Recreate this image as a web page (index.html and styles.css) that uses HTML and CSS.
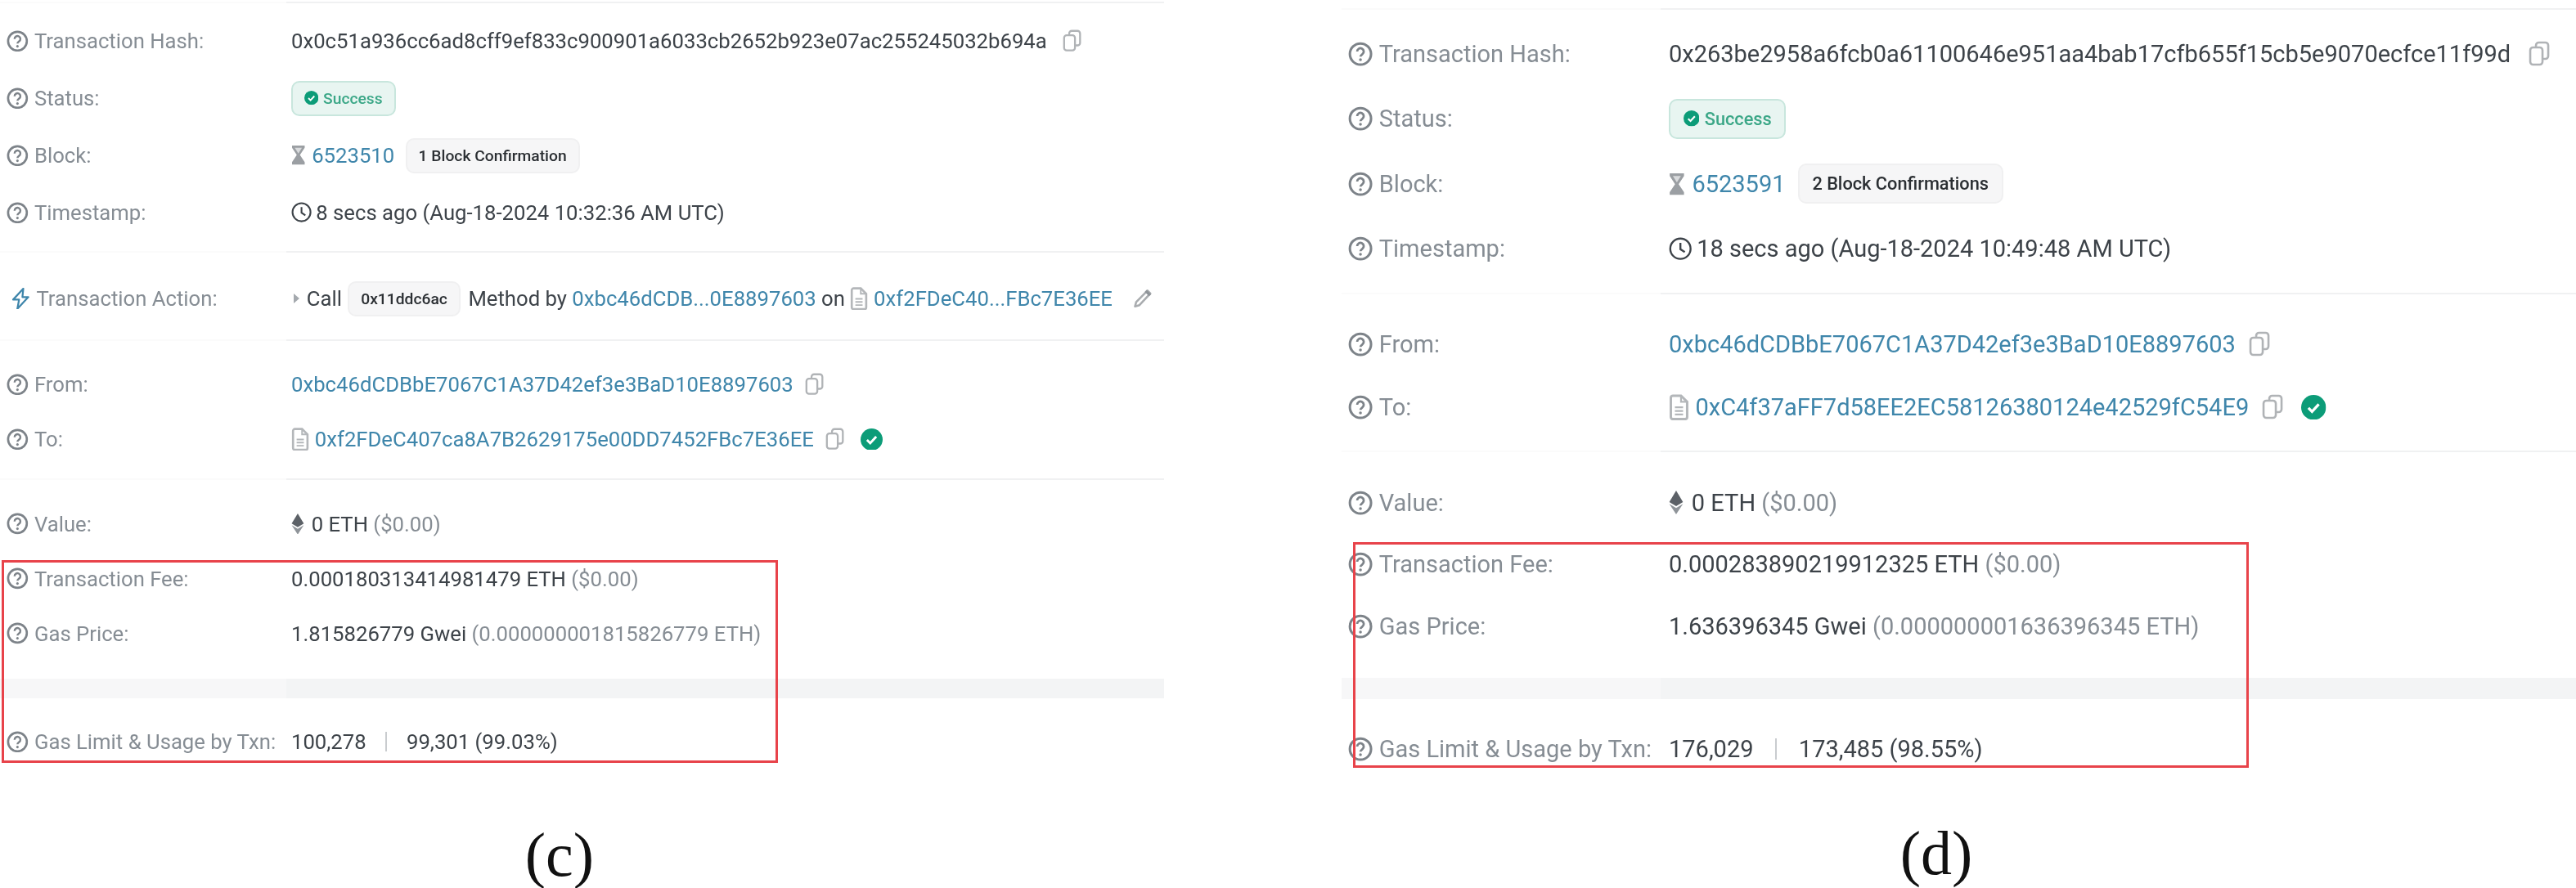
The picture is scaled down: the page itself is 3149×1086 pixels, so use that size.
FILE: index.html
```html
<!DOCTYPE html>
<html lang="en">
  <head>
    <meta charset="utf-8">
    <title>Transaction details</title>
    <link rel="stylesheet" href="styles.css">
  </head>
  <body>
    <!-- Icons used by both panels -->
    <svg class="defs" aria-hidden="true">
      <symbol id="i-help" viewBox="0 0 24 24">
        <circle cx="12" cy="12" r="10.3" fill="none" stroke="currentColor" stroke-width="2.4"/>
        <path d="M8.8 9.6a3.2 3.2 0 1 1 5 2.6c-1.1.8-1.8 1.2-1.8 2.4" fill="none" stroke="currentColor" stroke-width="2.2"/>
        <circle cx="12" cy="17.6" r="1.4" fill="currentColor"/>
      </symbol>
      <symbol id="i-copy" viewBox="0 0 26 31">
        <rect x="9" y="2" width="15" height="20" rx="3.5" fill="none" stroke="currentColor" stroke-width="2.6"/>
        <rect x="2" y="8" width="15" height="21" rx="3.5" fill="#fff" stroke="currentColor" stroke-width="2.6"/>
      </symbol>
      <symbol id="i-check" viewBox="0 0 24 24">
        <circle cx="12" cy="12" r="12" fill="currentColor"/>
        <path d="M7 12.5l3.5 3.5L17 9" fill="none" stroke="#fff" stroke-width="2.6"/>
      </symbol>
      <symbol id="i-glass" viewBox="0 0 18 26">
        <path d="M1 1h16v3l-6 9 6 9v3H1v-3l6-9-6-9z" fill="currentColor"/>
        <path d="M4.5 4h9L9 11z" fill="#d9dbdd"/>
      </symbol>
      <symbol id="i-clock" viewBox="0 0 24 24">
        <circle cx="12" cy="12" r="10.5" fill="none" stroke="currentColor" stroke-width="2"/>
        <path d="M12 6v6.5l4.5 3" fill="none" stroke="currentColor" stroke-width="2"/>
      </symbol>
      <symbol id="i-file" viewBox="0 0 20 26">
        <path d="M2 3.500a2 2 0 0 1 2-2h8l6 6v15a2 2 0 0 1-2 2H4a2 2 0 0 1-2-2z" fill="none" stroke="currentColor" stroke-width="2.400"/>
        <path d="M12 1.500v6h6M6 13h8M6 16.500h8M6 20h8" fill="none" stroke="currentColor" stroke-width="1.800"/>
      </symbol>
      <symbol id="i-eth" viewBox="0 0 16 26">
        <path d="M8 0l7.500 12.500L8 17 .5 12.500z" fill="#5c6167"/>
        <path d="M.5 14.500L8 19l7.500-4.500L8 26z" fill="#8f9499"/>
      </symbol>
      <symbol id="i-bolt" viewBox="0 0 24 26">
        <path d="M15 1L3 14h7l-2 11 13-14h-7z" fill="none" stroke="currentColor" stroke-width="2.200" stroke-linejoin="round"/>
      </symbol>
      <symbol id="i-pencil" viewBox="0 0 26 26">
        <path d="M19 3.500l3.500 3.500L9 21.500l-5.500 1.500L5 17.500z" fill="none" stroke="currentColor" stroke-width="2.600" stroke-linejoin="round"/>
        <path d="M18 2.500l5.500 5.500-2.500 2.500-5.500-5.500z" fill="#8f9499"/>
      </symbol>
    </svg>

    <main class="figure">
      <!-- Panel (c) -->
      <section class="panel panel-c">
        <div class="rule"></div>
        <div class="sec sec-main">
          <div class="row"><span class="label"><svg class="ic"><use href="#i-help"/></svg>Transaction Hash:</span><span class="value">0x0c51a936cc6ad8cff9ef833c900901a6033cb2652b923e07ac255245032b694a<svg class="ic-copy"><use href="#i-copy"/></svg></span></div>
          <div class="row"><span class="label"><svg class="ic"><use href="#i-help"/></svg>Status:</span><span class="value"><span class="badge-ok"><svg class="ic-ok"><use href="#i-check"/></svg>Success</span></span></div>
          <div class="row"><span class="label"><svg class="ic"><use href="#i-help"/></svg>Block:</span><span class="value"><svg class="ic-glass"><use href="#i-glass"/></svg><a class="link">6523510</a><span class="chip chip-block">1 Block Confirmation</span></span></div>
          <div class="row"><span class="label"><svg class="ic"><use href="#i-help"/></svg>Timestamp:</span><span class="value"><svg class="ic-clock"><use href="#i-clock"/></svg>8 secs ago (Aug-18-2024 10:32:36 AM UTC)</span></div>
        </div>
        <div class="rule"></div>
        <div class="sec sec-action">
          <div class="row"><span class="label"><svg class="ic ic-bolt"><use href="#i-bolt"/></svg>Transaction Action:</span><span class="value"><span class="caret"></span>Call<span class="chip chip-method">0x11ddc6ac</span>Method by <a class="link link-by">0xbc46dCDB...0E8897603</a> on <svg class="ic-file"><use href="#i-file"/></svg><a class="link">0xf2FDeC40...FBc7E36EE</a><svg class="ic-pencil"><use href="#i-pencil"/></svg></span></div>
        </div>
        <div class="rule"></div>
        <div class="sec sec-addr">
          <div class="row"><span class="label"><svg class="ic"><use href="#i-help"/></svg>From:</span><span class="value"><a class="link">0xbc46dCDBbE7067C1A37D42ef3e3BaD10E8897603</a><svg class="ic-copy"><use href="#i-copy"/></svg></span></div>
          <div class="row"><span class="label"><svg class="ic"><use href="#i-help"/></svg>To:</span><span class="value"><svg class="ic-file"><use href="#i-file"/></svg><a class="link">0xf2FDeC407ca8A7B2629175e00DD7452FBc7E36EE</a><svg class="ic-copy"><use href="#i-copy"/></svg><svg class="ic-verified"><use href="#i-check"/></svg></span></div>
        </div>
        <div class="rule"></div>
        <div class="sec sec-fees">
          <div class="row"><span class="label"><svg class="ic"><use href="#i-help"/></svg>Value:</span><span class="value"><svg class="ic-eth"><use href="#i-eth"/></svg>0 ETH&nbsp;<span class="muted">($0.00)</span></span></div>
          <div class="row"><span class="label"><svg class="ic"><use href="#i-help"/></svg>Transaction Fee:</span><span class="value">0.000180313414981479 ETH&nbsp;<span class="muted">($0.00)</span></span></div>
          <div class="row"><span class="label"><svg class="ic"><use href="#i-help"/></svg>Gas Price:</span><span class="value">1.815826779 Gwei&nbsp;<span class="muted">(0.000000001815826779 ETH)</span></span></div>
        </div>
        <div class="band"></div>
        <div class="sec sec-limit">
          <div class="row"><span class="label"><svg class="ic"><use href="#i-help"/></svg>Gas Limit &amp; Usage by Txn:</span><span class="value">100,278<span class="sep"></span>99,301 (99.03%)</span></div>
        </div>
        <p class="caption">(c)</p>
        <div class="mark"></div>
      </section>

      <!-- Panel (d) -->
      <section class="panel panel-d">
        <div class="rule"></div>
        <div class="sec sec-main">
          <div class="row"><span class="label"><svg class="ic"><use href="#i-help"/></svg>Transaction Hash:</span><span class="value">0x263be2958a6fcb0a61100646e951aa4bab17cfb655f15cb5e9070ecfce11f99d<svg class="ic-copy"><use href="#i-copy"/></svg></span></div>
          <div class="row"><span class="label"><svg class="ic"><use href="#i-help"/></svg>Status:</span><span class="value"><span class="badge-ok"><svg class="ic-ok"><use href="#i-check"/></svg>Success</span></span></div>
          <div class="row"><span class="label"><svg class="ic"><use href="#i-help"/></svg>Block:</span><span class="value"><svg class="ic-glass"><use href="#i-glass"/></svg><a class="link">6523591</a><span class="chip chip-block">2 Block Confirmations</span></span></div>
          <div class="row"><span class="label"><svg class="ic"><use href="#i-help"/></svg>Timestamp:</span><span class="value"><svg class="ic-clock"><use href="#i-clock"/></svg>18 secs ago (Aug-18-2024 10:49:48 AM UTC)</span></div>
        </div>
        <div class="rule"></div>
        <div class="sec sec-addr">
          <div class="row"><span class="label"><svg class="ic"><use href="#i-help"/></svg>From:</span><span class="value"><a class="link">0xbc46dCDBbE7067C1A37D42ef3e3BaD10E8897603</a><svg class="ic-copy"><use href="#i-copy"/></svg></span></div>
          <div class="row"><span class="label"><svg class="ic"><use href="#i-help"/></svg>To:</span><span class="value"><svg class="ic-file"><use href="#i-file"/></svg><a class="link">0xC4f37aFF7d58EE2EC58126380124e42529fC54E9</a><svg class="ic-copy"><use href="#i-copy"/></svg><svg class="ic-verified"><use href="#i-check"/></svg></span></div>
        </div>
        <div class="rule"></div>
        <div class="sec sec-fees">
          <div class="row"><span class="label"><svg class="ic"><use href="#i-help"/></svg>Value:</span><span class="value"><svg class="ic-eth"><use href="#i-eth"/></svg>0 ETH&nbsp;<span class="muted">($0.00)</span></span></div>
          <div class="row"><span class="label"><svg class="ic"><use href="#i-help"/></svg>Transaction Fee:</span><span class="value">0.000283890219912325 ETH&nbsp;<span class="muted">($0.00)</span></span></div>
          <div class="row"><span class="label"><svg class="ic"><use href="#i-help"/></svg>Gas Price:</span><span class="value">1.636396345 Gwei&nbsp;<span class="muted">(0.000000001636396345 ETH)</span></span></div>
        </div>
        <div class="band"></div>
        <div class="sec sec-limit">
          <div class="row"><span class="label"><svg class="ic"><use href="#i-help"/></svg>Gas Limit &amp; Usage by Txn:</span><span class="value">176,029<span class="sep"></span>173,485 (98.55%)</span></div>
        </div>
        <p class="caption">(d)</p>
        <div class="mark"></div>
      </section>
    </main>
  </body>
</html>
```

FILE: styles.css
```css
* {
  box-sizing: border-box;
}

body {
  margin: 0;
  background-color: #fff;
  font-family: Roboto, "Liberation Sans", sans-serif;
}

.defs {
  display: none;
}

.figure {
  display: flex;
  justify-content: space-between;
  width: 3149px;
  height: 1086px;
  overflow: hidden;
}

.panel {
  position: relative;
  color: #3d4349;
}

/* Both screenshots share the markup, only the scale differs */
.panel-c {
  width: 1423px;
  padding-top: 2px;
  font-size: 25.7px;
  --row: 70px;
  --row-addr: 67px;
  --row-fee: 67px;
  --label: 348px;
  --inset: 8px;
  --split: 350px;
}

.panel-d {
  width: 1509px;
  padding-top: 10px;
  font-size: 29px;
  --row: 79.5px;
  --row-addr: 77px;
  --row-fee: 75.5px;
  --label: 392.5px;
  --inset: 7.5px;
  --split: 390px;
}

.rule {
  height: 2px;
  background: linear-gradient(to right, #fbfbfb var(--split), #f0f1f2 var(--split));
}

.band {
  background: linear-gradient(to right, #f7f7f8 var(--split), #f3f4f5 var(--split));
}

.sec {
  filter: blur(0.7px);
}

.row {
  display: flex;
  align-items: center;
  height: var(--row);
  padding-left: var(--inset);
}

.sec-addr .row {
  height: var(--row-addr);
}

.sec-fees .row,
.sec-limit .row {
  height: var(--row-fee);
}

.panel-c .sec-main { padding: 11px 0 12px; }
.panel-c .sec-action { padding: 21px 0 15px; }
.panel-c .sec-addr { padding: 19.5px 0 14.5px; }
.panel-c .sec-fees { padding: 20px 0 22px; }
.panel-c .band { height: 24px; }
.panel-c .sec-limit { padding-top: 19.5px; }

.panel-d .sec-main { padding: 14px 0; }
.panel-d .sec-addr { padding: 22.5px 0 14.5px; }
.panel-d .sec-fees { padding: 24px 0 25px; }
.panel-d .band { height: 26.5px; }
.panel-d .sec-limit { padding-top: 23px; }

.label {
  display: flex;
  align-items: center;
  flex: none;
  width: var(--label);
  color: #868d94;
  white-space: nowrap;
}

.value {
  display: flex;
  align-items: center;
  white-space: pre;
}

.link {
  color: #3f86ab;
}

.muted {
  color: #868d94;
}

.ic {
  flex: none;
  width: 1.04em;
  height: 1.04em;
  margin-right: 0.28em;
  color: #7d8389;
}

.ic-bolt {
  margin-left: 0.16em;
  margin-right: 0.22em;
  color: #3f86ab;
}

.ic-copy {
  flex: none;
  width: 0.9em;
  height: 1.07em;
  margin-left: 0.55em;
  color: #b0b3b6;
}

.sec-main .ic-copy {
  margin-left: 0.76em;
}

.ic-file {
  flex: none;
  width: 0.86em;
  height: 1.12em;
  margin-right: 0.26em;
  color: #b4b7ba;
}

.ic-glass {
  flex: none;
  width: 0.68em;
  height: 0.98em;
  margin-right: 0.3em;
  color: #9b9fa3;
}

.ic-clock {
  flex: none;
  width: 0.98em;
  height: 0.98em;
  margin-right: 0.2em;
  color: #3d4349;
}

.ic-eth {
  flex: none;
  width: 0.62em;
  height: 1em;
  margin-right: 0.34em;
}

.ic-pencil {
  flex: none;
  width: 1em;
  height: 1em;
  margin-left: 0.95em;
  color: #a9acaf;
}

.ic-verified {
  flex: none;
  width: 1.05em;
  height: 1.05em;
  margin-left: 0.76em;
  color: #0c9c78;
}

.ic-ok {
  flex: none;
  width: 0.9em;
  height: 0.9em;
  margin-right: 0.3em;
  color: #0c9c78;
}

.badge-ok {
  display: flex;
  align-items: center;
  height: 43px;
  padding: 0 0.72em;
  border: 2px solid #c8e6dd;
  border-radius: 10px;
  background-color: #e8f5f1;
  color: #3ba787;
  font-size: 0.75em;
  font-weight: 500;
}

.chip {
  display: flex;
  align-items: center;
  height: 43px;
  padding: 0 0.72em;
  border: 2px solid #f0f0f1;
  border-radius: 10px;
  background-color: #f6f6f7;
  color: #2b2f33;
  font-size: 0.75em;
  font-weight: 500;
}

.panel-d .badge-ok,
.panel-d .chip {
  height: 49px;
}

.chip-block {
  margin-left: 0.7em;
}

.chip-method {
  margin: 0 0.5em 0 0.38em;
}

.caret {
  width: 0;
  height: 0;
  margin: 0 0.36em 0 0.1em;
  border-top: 0.26em solid transparent;
  border-bottom: 0.26em solid transparent;
  border-left: 0.3em solid #a4a9ae;
}

.sep {
  width: 2px;
  height: 0.9em;
  margin: 0 0.92em;
  background-color: #c9cccf;
}

.caption {
  margin: 0;
  padding-right: 55px;
  height: 76px;
  color: #111;
  font-family: "Liberation Serif", serif;
  font-size: 76px;
  line-height: 76px;
  text-align: center;
}

.panel-c .caption {
  margin-top: 66px;
}

.panel-d .caption {
  margin-top: 51px;
}

/* Red highlight drawn over the screenshot */
.mark {
  position: absolute;
  border: 3.5px solid #e8434a;
}

.panel-c .mark {
  left: 2px;
  top: 685px;
  width: 949px;
  height: 248px;
}

.panel-d .mark {
  left: 14px;
  top: 663px;
  width: 1095px;
  height: 276px;
}
```
